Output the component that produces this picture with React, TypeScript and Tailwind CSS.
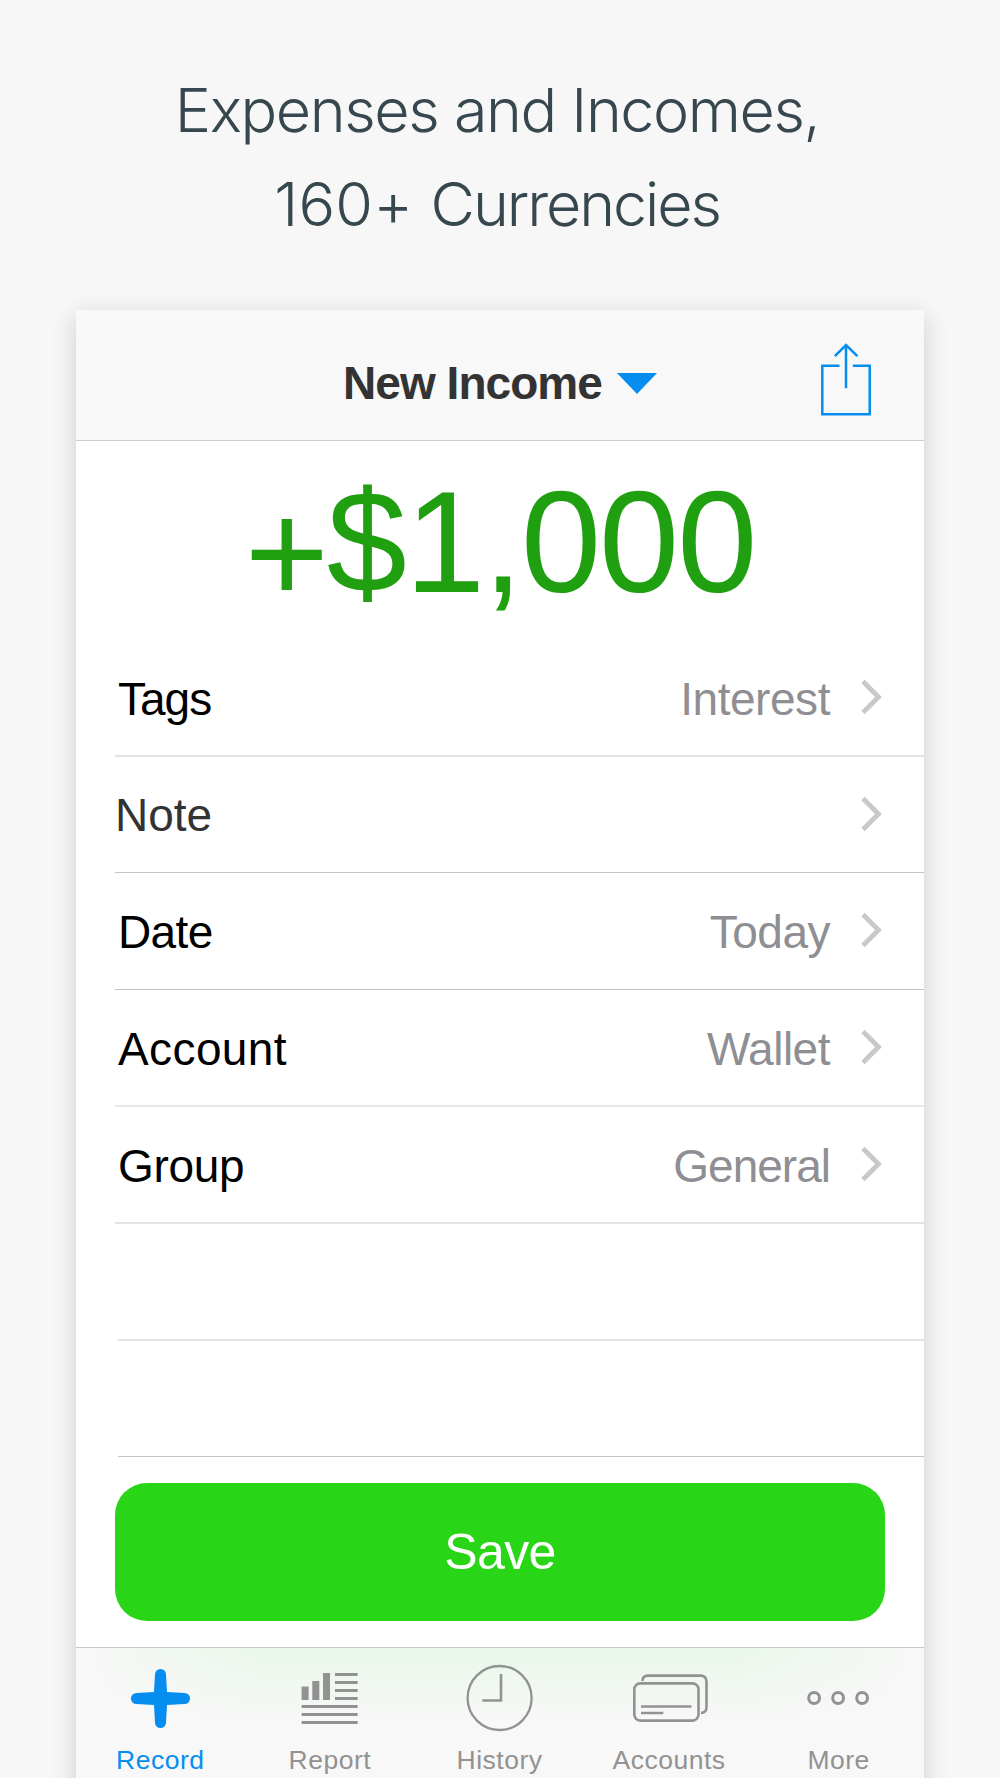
import type { ReactNode } from "react";
import clsx from "clsx";

type Row = {
  label?: string;
  value?: string;
  className: string;
  labelClassName?: string;
  valueClassName?: string;
};

const ROWS: Row[] = [
  {
    label: "Tags",
    value: "Interest",
    className: "ml-[39px] h-[117px] border-b-2 border-[#e3e3e5]",
    labelClassName: "pt-[3px] pl-[3px] tracking-[-1px] text-black",
    valueClassName: "tracking-[-0.45px]",
  },
  {
    label: "Note",
    className: "ml-[39px] h-[116px] border-b border-[#c3c3c9]",
    labelClassName: "pt-[1px] text-[#333333]",
  },
  {
    label: "Date",
    value: "Today",
    className: "ml-[39px] h-[117px] border-b border-[#c3c3c5]",
    labelClassName: "pt-[3px] pl-[3px] tracking-[-0.6px] text-black",
    valueClassName: "tracking-[-0.5px]",
  },
  {
    label: "Account",
    value: "Wallet",
    className: "ml-[39px] h-[117px] border-b-2 border-[#e8e8e9]",
    labelClassName: "pt-[3px] pl-[3px] tracking-[0.4px] text-black",
    valueClassName: "tracking-[-0.5px]",
  },
  {
    label: "Group",
    value: "General",
    className: "ml-[39px] h-[117px] border-b-2 border-[#e3e3e5]",
    labelClassName: "pt-[3px] pl-[3px] tracking-[-0.3px] text-black",
    valueClassName: "tracking-[-1px]",
  },
  { className: "ml-[42px] h-[117px] border-b-2 border-[#e3e3e5]" },
  { className: "ml-[42px] h-[116px] border-b border-[#c3c3c9]" },
];

function Chevron() {
  return (
    <svg viewBox="0 0 21 36" className="-mt-[2px] h-9 w-[21px]" fill="none">
      <path d="M2 2.5 17.5 18 2 33.5" stroke="#c7c7cc" strokeWidth="4.8" />
    </svg>
  );
}

function ShareIcon() {
  return (
    <svg viewBox="0 0 50 73" className="h-[73px] w-[50px]" fill="none" stroke="#058ef0" strokeWidth="2.5">
      <path d="M18.5 22.8H1.3V71.2H48.7V22.8H31.8" />
      <path d="M25 45.2V2" />
      <path d="M13.8 13.2 25 2 36.4 13.2" />
    </svg>
  );
}

function TabIcon({ children }: { children: ReactNode }) {
  return (
    <svg viewBox="0 0 80 80" className="h-20 w-20" fill="none" stroke="currentColor" strokeWidth="2.6">
      {children}
    </svg>
  );
}

const TABS: { label: string; icon: ReactNode; active?: boolean }[] = [
  {
    label: "Record",
    active: true,
    icon: (
      <path
        stroke="none"
        fill="currentColor"
        d="M34 16.5a5.5 5.5 0 0 1 11 0L46 34 63.5 35a5.5 5.5 0 0 1 0 11L46 47 45 64.5a5.5 5.5 0 0 1-11 0L33 47 15.5 46a5.5 5.5 0 0 1 0-11L33 34Z"
      />
    ),
  },
  {
    label: "Report",
    icon: (
      <>
        <path
          stroke="none"
          fill="currentColor"
          d="M11.6 28.5h7V42h-7zM22.3 23h7v19h-7zM33 15h7v27h-7z"
        />
        <path
          strokeWidth="2.8"
          d="M45 16.5h22.6M45 24.5h22.6M45 32.5h22.6M45 40.5h22.6M11.6 48.5h56M11.6 56.5h56M11.6 64.5h56"
        />
      </>
    ),
  },
  {
    label: "History",
    icon: (
      <>
        <circle cx="39.6" cy="40" r="32" strokeWidth="2.3" />
        <path d="M41 16v26.5H22.3" />
      </>
    ),
  },
  {
    label: "Accounts",
    icon: (
      <>
        <rect x="4.3" y="25.4" width="64.2" height="37.2" rx="6" />
        <path d="M12.5 23c0-3.5 2-5.4 5.5-5.4h52.3q6.200 0 6.200 6.200v25c0 4-2 6.200-5.500 6.200" />
        <path d="M11 48.5h50.5M11 55h22.3" />
      </>
    ),
  },
  {
    label: "More",
    icon: (
      <>
        <circle cx="15.1" cy="40" r="5.4" strokeWidth="3" />
        <circle cx="39.1" cy="40" r="5.4" strokeWidth="3" />
        <circle cx="63.1" cy="40" r="5.4" strokeWidth="3" />
      </>
    ),
  },
];

export default function App() {
  return (
    <main className="h-[1778px] w-[1000px] overflow-hidden bg-[#f7f7f7] font-['Liberation_Sans',Arial,sans-serif]">
      <h1 className="h-[310px] pt-[63px] pr-[6px] text-center font-['Inter',sans-serif] text-[61px] leading-[94px] font-light tracking-[-1.45px] text-[#37474f]">
        Expenses and Incomes,
        <br />
        <span className="tracking-[0.2px]">160+ </span>
        <span className="tracking-[-2.1px]">Currencies</span>
      </h1>

      <div className="mx-auto flex h-[1500px] w-[848px] flex-col bg-white shadow-[0_6px_24px_rgba(0,0,0,0.17)]">
        <header className="flex h-[131px] items-center border-b border-[#d0d0d0] bg-[#f8f8f8] pt-[17px] pr-[53px] pl-[267px]">
          <span className="w-[274px] text-[46px] font-bold tracking-[-0.95px] whitespace-nowrap text-[#333333]">
            New Income
          </span>
          <svg viewBox="0 0 40 21" className="h-[21px] w-10" fill="#058ef0">
            <path d="M0 0h40L20 21z" />
          </svg>
          <div className="-mt-[9px] ml-auto">
            <ShareIcon />
          </div>
        </header>

        <div className="h-[199px] pt-[22px] text-center text-[144px] leading-[160px] tracking-[-2px] text-[#20a010]">
          <span className="align-[-11px] leading-none">+</span>$1,000
        </div>

        <section className="text-[46px]">
          {ROWS.map((row, i) => (
            <div key={i} className={clsx("flex items-center pr-[42px]", row.className)}>
              {row.label && (
                <>
                  <span className={row.labelClassName}>{row.label}</span>
                  <span className={clsx("ml-auto pt-[3px] pr-[31px] text-[#8e8e93]", row.valueClassName)}>
                    {row.value}
                  </span>
                  <Chevron />
                </>
              )}
            </div>
          ))}
        </section>

        <button className="mx-[39px] mt-[26px] h-[138px] w-[770px] shrink-0 rounded-[32px] bg-[#29d617] text-[50px] tracking-[-0.6px] text-white">
          Save
        </button>

        <nav className="mt-[26px] h-[131px] border-t border-[#c5cac5] bg-linear-to-b from-[#eaf7ea] to-[#f8f8f8] to-[78px]">
          <div className="flex h-full bg-[linear-gradient(90deg,#f8f8f8_0%,#f8f8f800_22%,#f8f8f800_78%,#f8f8f8_100%)]">
            {TABS.map((tab) => (
              <div
                key={tab.label}
                className={clsx(
                  "flex flex-1 flex-col items-center pt-[10px]",
                  tab.active ? "text-[#058ef0]" : "text-[#929292]",
                )}
              >
                <TabIcon>{tab.icon}</TabIcon>
                <span className="mt-[7px] pr-[1px] text-[26.5px] leading-[30px] tracking-[0.5px]">
                  {tab.label}
                </span>
              </div>
            ))}
          </div>
        </nav>
      </div>
    </main>
  );
}
